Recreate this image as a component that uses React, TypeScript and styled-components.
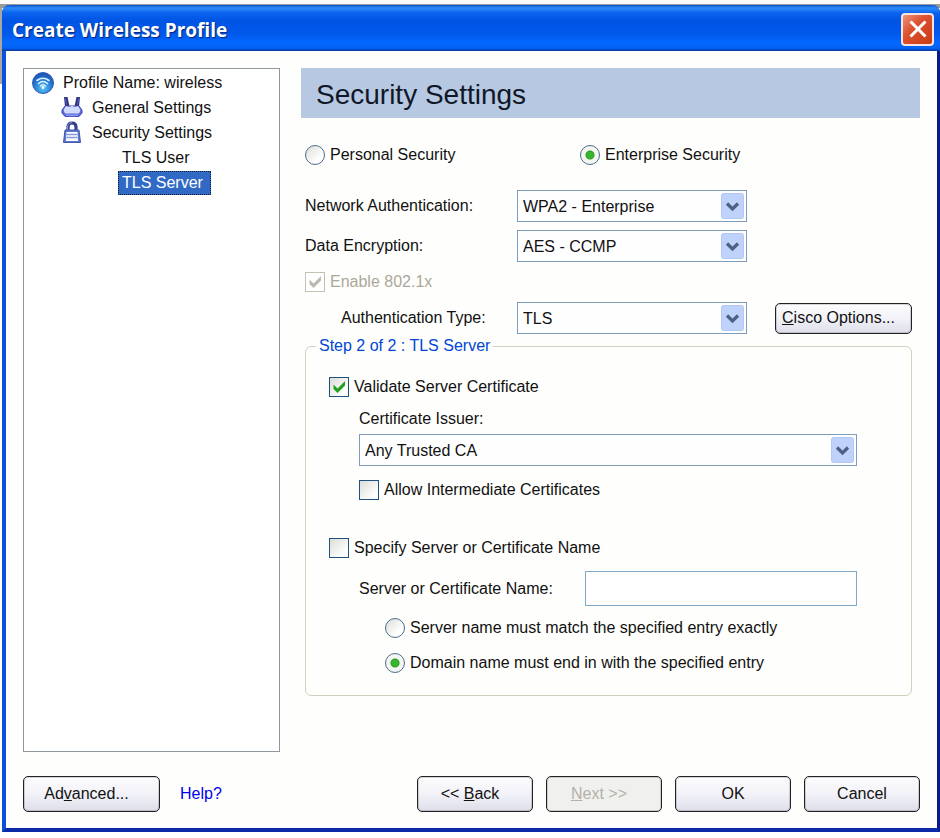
import React, { useId, useState } from "react";
import styled, { createGlobalStyle, css } from "styled-components";

const Global = createGlobalStyle`
  *, *::before, *::after { box-sizing: border-box; }
  html, body { margin: 0; padding: 0; }
  body, button, input, select {
    font-family: "Liberation Sans", Arial, sans-serif;
    font-size: 16px;
    line-height: 18px;
    color: #111;
  }
`;

const Desktop = styled.div`
  display: flex;
  min-height: 100vh;
  padding: 5px 0 6px 2px;
  background: linear-gradient(#fbfbf8 0 4px, #9a9a9c 4px 8px, transparent 8px),
    linear-gradient(#a8a8a0, #a8a8a0) 0 0 / 2px 84px no-repeat, #fff;
`;

const Window = styled.main`
  flex: 1;
  display: flex;
  flex-direction: column;
  border: solid;
  border-width: 0 3px 4px 4px;
  border-color: #0a1a8c #0a1a8c #0a2aa8 #0a50dc;
  border-radius: 8px 8px 0 0;
  background: #fefefc;
`;

const TitleBar = styled.header`
  display: flex;
  align-items: center;
  justify-content: space-between;
  height: 46px;
  margin: 0 -3px 0 -4px;
  padding: 3px 6px 0 10px;
  border-radius: 8px 8px 0 0;
  border-bottom: 1px solid #0a3ca8;
  background: linear-gradient(#0b50c8 0, #2f8cf8 3px, #0a62ee 8px, #0054e3 16px, #0058ea 28px, #0468fe 38px, #0462f4 43px, #0048c8 45px);
`;

const Title = styled.h1`
  margin: 0;
  padding-top: 2px;
  font: bold 19px/26px "Open Sans", "Noto Sans", sans-serif;
  color: #fff;
  text-shadow: 1px 1px 1px #06257c;
`;

const CloseButton = styled.button`
  display: grid;
  place-items: center;
  width: 33px;
  height: 33px;
  padding: 0;
  border: 2px solid #f6e4e0;
  border-radius: 4px;
  background: linear-gradient(135deg, #ee9478, #dd5030 40%, #c83c14);
`;

const Body = styled.div`
  flex: 1;
  display: flex;
  gap: 21px;
  padding: 17px 17px 24px;
`;

const Tree = styled.ul`
  flex: none;
  width: 257px;
  margin: 0;
  padding: 1px 8px;
  list-style: none;
  border: 1px solid #8f989c;
  background: #fff;
`;

const TreeItem = styled.li<{ $depth: number }>`
  display: flex;
  align-items: center;
  gap: 9px;
  height: 25px;
  padding-left: ${(p) => [0, 29, 86][p.$depth]}px;
  white-space: nowrap;
`;

const TreeLabel = styled.span<{ $selected?: boolean }>`
  padding: 3px 4px;
  margin-left: ${(p) => (p.$selected === undefined ? "-4px" : "0")};
  ${(p) =>
    p.$selected &&
    css`
      padding-right: 8px;
      color: #fff;
      background: #316ac5;
      outline: 1px dotted #101c34;
      outline-offset: -1px;
    `}
`;

const Settings = styled.section`
  flex: 1;
  min-width: 0;
`;

const Heading = styled.h2`
  margin: 0;
  padding: 10px 15px 6px;
  font-size: 28px;
  line-height: 34px;
  font-weight: normal;
  color: #101828;
  background: #b7c8e2;
`;

const Form = styled.div`
  padding: 27px 8px 0 4px;
`;

const ModeRow = styled.div`
  display: grid;
  grid-template-columns: 275px 1fr;
  margin-bottom: 25px;
`;

const FieldRow = styled.div<{ $below: number }>`
  display: grid;
  grid-template-columns: 212px 230px 1fr;
  align-items: center;
  margin-bottom: ${(p) => p.$below}px;
`;

const EnableRow = styled.div`
  margin-bottom: 10px;
`;

const FieldLabel = styled.label<{ $indent?: boolean }>`
  padding-left: ${(p) => (p.$indent ? "36px" : "0")};
`;

const SelectFrame = styled.div`
  position: relative;
`;

const SelectBox = styled.select`
  display: block;
  width: 100%;
  height: 32px;
  padding: 1px 30px 0 5px;
  appearance: none;
  border: 1px solid #7f9db9;
  border-radius: 0;
  background: #fefeff;
`;

const Arrow = styled.svg`
  position: absolute;
  top: 3px;
  right: 3px;
  width: 23px;
  height: 26px;
  pointer-events: none;
`;

const Choice = styled.label<{ $disabled?: boolean }>`
  display: flex;
  align-items: center;
  gap: 5px;
  height: 20px;
  color: ${(p) => (p.$disabled ? "#aca899" : "inherit")};
`;

const Radio = styled.input.attrs({ type: "radio" })`
  flex: none;
  width: 20px;
  height: 20px;
  margin: 0;
  appearance: none;
  border: 1px solid #4d6c8c;
  border-radius: 50%;
  background: linear-gradient(135deg, #dcdcd7, #fff 70%);
  &:checked {
    background: radial-gradient(circle, #37b52c 0 3px, #2c9a25 4px, #f4f6f2 5px);
  }
`;

const Check = styled.input.attrs({ type: "checkbox" })`
  flex: none;
  width: 20px;
  height: 20px;
  margin: 0;
  appearance: none;
  border: 1px solid ${(p) => (p.disabled ? "#c4c2b4" : "#1c5180")};
  background: ${(p) => (p.disabled ? "#fff" : "linear-gradient(135deg, #dcdcd7, #fff 80%)")};
`;

const CheckFrame = styled.span`
  position: relative;
  display: flex;
`;

const Tick = styled.svg`
  position: absolute;
  inset: 0;
  width: 20px;
  height: 20px;
  pointer-events: none;
`;

const Button = styled.button<{ $wide?: boolean; $short?: boolean; $tail?: boolean }>`
  width: ${(p) => (p.$wide ? 137 : 116)}px;
  height: ${(p) => (p.$short ? 31 : 36)}px;
  padding: 0 ${(p) => (p.$tail ? 10 : 0)}px 0 0;
  border: 1px solid #222;
  border-radius: 5px;
  background: linear-gradient(#fdfdfe, #f2f2f8 50%, #dedeea);
  box-shadow: inset 0 0 0 1px rgba(60, 60, 70, 0.2);
  &:disabled {
    color: #b4b2a8;
    background: #f0f0ee;
  }
`;

const CiscoSlot = styled.div`
  justify-self: end;
`;

const Group = styled.fieldset`
  min-width: 0;
  margin: 3px 0 0;
  padding: 22px 54px 22px 23px;
  border: 1px solid #d0d0bf;
  border-radius: 6px;
`;

const Legend = styled.legend`
  margin-left: -13px;
  padding: 0 3px;
  color: #0046d5;
`;

const Nested = styled.div<{ $above: number; $deep?: boolean }>`
  margin-top: ${(p) => p.$above}px;
  padding-left: ${(p) => (p.$deep ? 56 : 30)}px;
`;

const Issuer = styled.div`
  display: grid;
  gap: 6px;
`;

const NameRow = styled.div`
  display: grid;
  grid-template-columns: 226px 1fr;
  align-items: center;
`;

const TextBox = styled.input`
  width: 100%;
  height: 35px;
  padding: 0 5px;
  border: 1px solid #7fa9c9;
  background: #fff;
`;

const Spaced = styled.div`
  margin-top: 38px;
`;

const MatchChoices = styled.div`
  display: grid;
  gap: 15px;
`;

const Footer = styled.footer`
  display: flex;
  align-items: center;
  gap: 20px;
  padding: 0 17px 16px;
`;

const FooterActions = styled.div`
  display: flex;
  gap: 13px;
  margin-left: auto;
`;

const HelpLink = styled.a`
  color: #0000f0;
  text-decoration: none;
`;

const Icon = styled.svg`
  flex: none;
  width: 22px;
  height: 22px;
  overflow: visible;
`;

function WifiIcon() {
  return (
    <Icon viewBox="0 0 22 22" aria-hidden="true">
      <defs>
        <radialGradient id="globe" cx="0.5" cy="0.75" r="0.75">
          <stop offset="0" stopColor="#58c4f4" />
          <stop offset="0.6" stopColor="#2474d0" />
          <stop offset="1" stopColor="#1c4cb0" />
        </radialGradient>
      </defs>
      <circle cx="11" cy="11" r="10.5" fill="url(#globe)" stroke="#3060b4" />
      <g fill="none" stroke="#d8f0fc" strokeWidth="1.6" strokeLinecap="round">
        <path d="M5 8.500Q11 4 17 8.500" />
        <path d="M6.500 11.500Q11 7.500 15.500 11.500" />
        <path d="M8.500 14Q11 11.500 13.500 14" />
      </g>
      <circle cx="11" cy="15.500" r="1.400" fill="#fff" />
    </Icon>
  );
}

function RouterIcon() {
  return (
    <Icon viewBox="0 0 22 22" aria-hidden="true">
      <path d="M3 0h3.500l2 9.500H4zM15.500 0H19l-1 9.500h-4.500z" fill="#30307c" />
      <path d="M4.500 1.500l1 6M17.500 1.500l-1 6" stroke="#5868c8" />
      <path d="M4 9h14l3 4v3l-3 3.500H4L1 16v-3z" fill="#5c68d4" stroke="#4048b0" strokeLinejoin="round" />
      <path d="M5 9q3 1.500 6 0 3 1.500 6 0l2.500 4-1.500 3.500H4L2.500 13z" fill="#d0dafc" />
      <path d="M5 18q6 1 12 0" fill="none" stroke="#8c98f0" strokeWidth="1.500" />
    </Icon>
  );
}

function LockIcon() {
  return (
    <Icon viewBox="0 0 22 22" aria-hidden="true">
      <path d="M7 9V5Q7 1 11 1T15 5V9" fill="none" stroke="#34408c" strokeWidth="3.200" />
      <path d="M6.500 8V5Q6.500 1 11 0.500" fill="none" stroke="#8494e0" />
      <path d="M4 8h14l1.500 12.500h-17z" fill="#5c78d0" stroke="#4058a8" strokeLinejoin="round" />
      <path d="M5.500 10h11l.5 9H5z" fill="#fff" />
      <path d="M5.500 12.500h11M5.500 15.500h11" stroke="#8098dc" strokeWidth="1.500" />
    </Icon>
  );
}

type DropDownProps = { id: string; options: string[] };

function DropDown({ id, options }: DropDownProps) {
  return (
    <SelectFrame>
      <SelectBox id={id}>
        {options.map((option) => (
          <option key={option}>{option}</option>
        ))}
      </SelectBox>
      <Arrow viewBox="0 0 23 26" aria-hidden="true">
        <rect x="0.500" y="0.500" width="22" height="25" rx="2" fill="#bfd2fb" stroke="#b4c8f4" />
        <path d="M6 10.500l5.500 5.500 5.500-5.500" fill="none" stroke="#4d6185" strokeWidth="3.200" />
      </Arrow>
    </SelectFrame>
  );
}

type CheckOptionProps = { label: string; initial?: boolean; disabled?: boolean };

function CheckOption({ label, initial = false, disabled }: CheckOptionProps) {
  const [on, setOn] = useState(initial);
  return (
    <Choice $disabled={disabled}>
      <CheckFrame>
        <Check checked={on} disabled={disabled} onChange={(e) => setOn(e.target.checked)} />
        {on && (
          <Tick viewBox="0 0 20 20" aria-hidden="true">
            <path d="M4.500 7.500v4.500l4 4L16 8.500V4l-7.500 7.500z" fill={disabled ? "#bcbaae" : "#21a121"} />
          </Tick>
        )}
      </CheckFrame>
      {label}
    </Choice>
  );
}

export default function App() {
  const id = useId();
  return (
    <>
      <Global />
      <Desktop>
        <Window>
          <TitleBar>
            <Title>Create Wireless Profile</Title>
            <CloseButton type="button" aria-label="Close">
              <svg width="20" height="20" viewBox="0 0 20 20" aria-hidden="true">
                <path d="M2.500 2.500l15 15M17.500 2.500l-15 15" stroke="#fff" strokeWidth="3" />
              </svg>
            </CloseButton>
          </TitleBar>
          <Body>
            <Tree>
              <TreeItem $depth={0}>
                <WifiIcon />
                <TreeLabel>Profile Name: wireless</TreeLabel>
              </TreeItem>
              <TreeItem $depth={1}>
                <RouterIcon />
                <TreeLabel>General Settings</TreeLabel>
              </TreeItem>
              <TreeItem $depth={1}>
                <LockIcon />
                <TreeLabel>Security Settings</TreeLabel>
              </TreeItem>
              <TreeItem $depth={2}>
                <TreeLabel $selected={false}>TLS User</TreeLabel>
              </TreeItem>
              <TreeItem $depth={2}>
                <TreeLabel $selected>TLS Server</TreeLabel>
              </TreeItem>
            </Tree>
            <Settings>
              <Heading>Security Settings</Heading>
              <Form>
                <ModeRow>
                  <Choice>
                    <Radio name="mode" />
                    Personal Security
                  </Choice>
                  <Choice>
                    <Radio name="mode" defaultChecked />
                    Enterprise Security
                  </Choice>
                </ModeRow>
                <FieldRow $below={8}>
                  <FieldLabel htmlFor={`${id}-auth`}>Network Authentication:</FieldLabel>
                  <DropDown id={`${id}-auth`} options={["WPA2 - Enterprise"]} />
                </FieldRow>
                <FieldRow $below={10}>
                  <FieldLabel htmlFor={`${id}-enc`}>Data Encryption:</FieldLabel>
                  <DropDown id={`${id}-enc`} options={["AES - CCMP"]} />
                </FieldRow>
                <EnableRow>
                  <CheckOption label="Enable 802.1x" initial disabled />
                </EnableRow>
                <FieldRow $below={0}>
                  <FieldLabel $indent htmlFor={`${id}-type`}>
                    Authentication Type:
                  </FieldLabel>
                  <DropDown id={`${id}-type`} options={["TLS"]} />
                  <CiscoSlot>
                    <Button type="button" $wide $short $tail>
                      <u>C</u>isco Options...
                    </Button>
                  </CiscoSlot>
                </FieldRow>
                <Group>
                  <Legend>Step 2 of 2 : TLS Server</Legend>
                  <CheckOption label="Validate Server Certificate" initial />
                  <Nested $above={13}>
                    <Issuer>
                      <FieldLabel htmlFor={`${id}-issuer`}>Certificate Issuer:</FieldLabel>
                      <DropDown id={`${id}-issuer`} options={["Any Trusted CA"]} />
                    </Issuer>
                  </Nested>
                  <Nested $above={14}>
                    <CheckOption label="Allow Intermediate Certificates" />
                  </Nested>
                  <Spaced>
                    <CheckOption label="Specify Server or Certificate Name" />
                  </Spaced>
                  <Nested $above={13}>
                    <NameRow>
                      <FieldLabel htmlFor={`${id}-name`}>Server or Certificate Name:</FieldLabel>
                      <TextBox id={`${id}-name`} type="text" />
                    </NameRow>
                  </Nested>
                  <Nested $above={12} $deep>
                    <MatchChoices>
                      <Choice>
                        <Radio name="match" />
                        Server name must match the specified entry exactly
                      </Choice>
                      <Choice>
                        <Radio name="match" defaultChecked />
                        Domain name must end in with the specified entry
                      </Choice>
                    </MatchChoices>
                  </Nested>
                </Group>
              </Form>
            </Settings>
          </Body>
          <Footer>
            <Button type="button" $wide $tail>
              Ad<u>v</u>anced...
            </Button>
            <HelpLink href="#help">Help?</HelpLink>
            <FooterActions>
              <Button type="button" $tail>
                &lt;&lt; <u>B</u>ack
              </Button>
              <Button type="button" disabled $tail>
                <u>N</u>ext &gt;&gt;
              </Button>
              <Button type="button">OK</Button>
              <Button type="button">Cancel</Button>
            </FooterActions>
          </Footer>
        </Window>
      </Desktop>
    </>
  );
}
